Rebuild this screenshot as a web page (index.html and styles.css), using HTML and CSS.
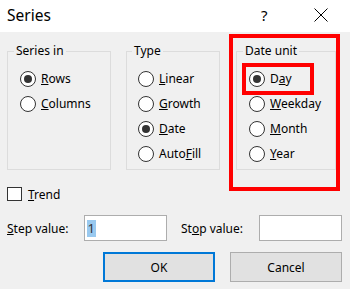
FILE: index.html
```html
<!DOCTYPE html>
<html lang="en">
<head>
  <meta charset="UTF-8" />
  <title>Series</title>
  <link rel="stylesheet" href="styles.css">
</head>
<body>
  <div class="dialog">
    <div class="titlebar">
      <span class="title">Series</span>
      <span class="help">?</span>
      <svg class="close" width="14" height="14" viewBox="0 0 14 14">
        <path d="M0.5 0.5 L13.5 13.5 M13.5 0.5 L0.5 13.5" stroke="#000" stroke-width="1" fill="none"/>
      </svg>
    </div>

    <div class="content">
      <div class="groups">
        <fieldset class="group group-series">
          <legend>Series in</legend>
          <label class="radio"><span class="dot on"></span><span><u>R</u>ows</span></label>
          <label class="radio"><span class="dot"></span><span><u>C</u>olumns</span></label>
        </fieldset>
        <fieldset class="group group-type">
          <legend>Type</legend>
          <label class="radio"><span class="dot"></span><span><u>L</u>inear</span></label>
          <label class="radio"><span class="dot"></span><span><u>G</u>rowth</span></label>
          <label class="radio"><span class="dot on"></span><span><u>D</u>ate</span></label>
          <label class="radio"><span class="dot"></span><span>Auto<u>F</u>ill</span></label>
        </fieldset>
        <fieldset class="group group-unit">
          <legend>Date unit</legend>
          <label class="radio"><span class="dot on"></span><span>D<u>a</u>y</span></label>
          <label class="radio"><span class="dot"></span><span><u>W</u>eekday</span></label>
          <label class="radio"><span class="dot"></span><span><u>M</u>onth</span></label>
          <label class="radio"><span class="dot"></span><span><u>Y</u>ear</span></label>
        </fieldset>
      </div>

      <label class="check"><span class="box"></span><span><u>T</u>rend</span></label>

      <div class="values">
        <span class="val-label"><u>S</u>tep value:</span>
        <div class="field"><span class="sel">1</span></div>
        <span class="val-label stop">St<u>o</u>p value:</span>
        <div class="field"></div>
      </div>

      <div class="buttons">
        <button class="btn default">OK</button>
        <button class="btn">Cancel</button>
      </div>
    </div>

    <!-- highlight marks drawn over the dialog -->
    <div class="mark mark-unit"></div>
    <div class="mark mark-day"></div>
  </div>
</body>
</html>
```

FILE: styles.css
```css
body { margin: 0; font-family: "Noto Sans", "Open Sans", sans-serif; font-size: 12px; color: #000; background: #f0f0f0; }
.dialog { position: relative; width: 350px; height: 289px; background: #f0f0f0; overflow: hidden; }

.titlebar { height: 32px; background: #fff; display: flex; align-items: center; padding-left: 7px; box-sizing: border-box; }
.title { font-size: 15.5px; flex: 1; position: relative; top: -1px; }
.help { font-size: 15px; width: 7px; margin-right: 46px; position: relative; top: -1px; }
.close { margin-right: 22px; position: relative; top: -1px; }

.content { padding: 11px 8px 0 7px; }

.groups { display: flex; }
.group { margin: 0; height: 127px; box-sizing: border-box; border: 1px solid #dcdcdc; padding: 7px 0 0 12px; }
.group legend { line-height: 16px; padding: 0 2px; margin-left: -6px; }
.group-series { width: 104px; }
.group-type { width: 94px; margin-left: 15px; padding-left: 11px; }
.group-unit { width: 100px; margin-left: 16px; }

.radio { display: flex; align-items: center; height: 25px; gap: 5px; }
.dot { width: 16px; height: 16px; box-sizing: border-box; border: 1px solid #333; border-radius: 50%; background: #fff;
       display: flex; align-items: center; justify-content: center; }
.dot.on::after { content: ""; width: 8px; height: 8px; border-radius: 50%; background: #333; }

.check { display: flex; align-items: center; gap: 6px; height: 16px; margin-top: 16px; }
.box { width: 15px; height: 14px; box-sizing: border-box; border: 1px solid #333; background: #fff; }

.values { display: flex; align-items: center; margin-top: 13px; }
.val-label { width: 77px; }
.val-label.stop { width: 78px; margin-left: 14px; }
.field { width: 84px; height: 26px; box-sizing: border-box; border: 1px solid #adadad; background: #fff;
         display: flex; align-items: center; padding-left: 2px; }
.sel { background: #99c9ef; color: #333; font-size: 13px; padding: 0 1px; line-height: 17px; }

.buttons { display: flex; justify-content: flex-end; gap: 15px; margin-top: 11px; }
.btn { width: 112px; height: 30px; font: inherit; font-size: 12px; color: #000; background: #e1e1e1; border: 1px solid #adadad; }
.btn.default { border: 2px solid #0078d7; }

.mark { position: absolute; border: 4px solid #f00; box-sizing: border-box; }
.mark-unit { left: 229px; top: 34px; width: 111px; height: 157px; }
.mark-day { left: 242px; top: 63px; width: 72px; height: 32px; }
```
